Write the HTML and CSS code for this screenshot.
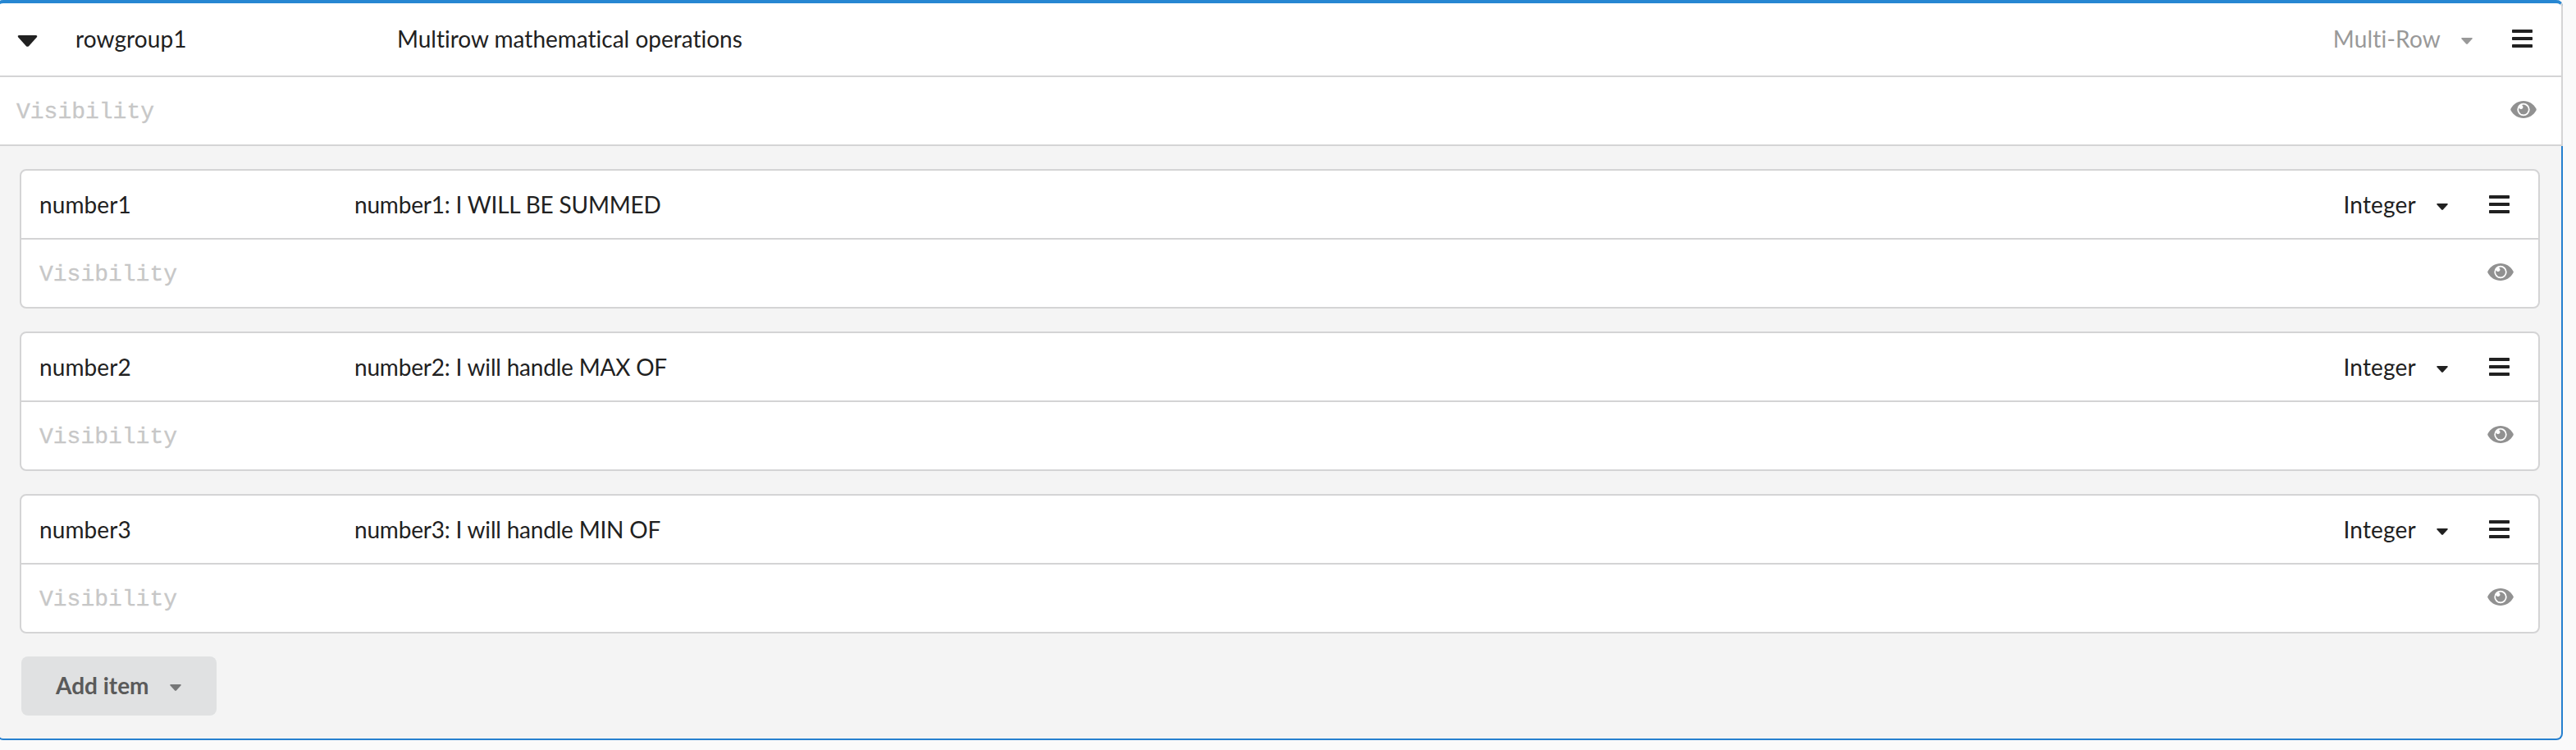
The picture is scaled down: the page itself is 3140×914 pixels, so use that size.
FILE: index.html
```html
<!DOCTYPE html>
<html lang="en">
<head>
<meta charset="utf-8">
<title>Form editor</title>
<link rel="stylesheet" href="styles.css">
</head>
<body>
<svg class="sprite" aria-hidden="true">
  <symbol id="caret" viewBox="0 0 14 8"><path d="M1 0H13Q14.300 .3 13.400 1.400L7.900 7.500Q7 8.300 6.100 7.500L.6 1.400Q-.3 .3 1 0Z"/></symbol>
  <symbol id="bars" viewBox="0 0 25 22"><rect width="25" height="4" rx=".8"/><rect y="9" width="25" height="4" rx=".8"/><rect y="18" width="25" height="4" rx=".8"/></symbol>
  <symbol id="eye" viewBox="0 0 32 21"><path fill-rule="evenodd" d="M.5 9.500C3.600 3.800 9.400 0 16 0S28.400 3.800 31.500 9.500Q32 10.500 31.500 11.500C28.400 17.200 22.600 21 16 21S3.600 17.200 .5 11.500Q0 10.500 .5 9.500ZM8.300 10.500A7.700 7.700 0 1 0 23.700 10.500A7.700 7.700 0 1 0 8.300 10.500Z"/><path d="M13.700 5.100A5.900 5.900 0 1 1 10.600 8.200A2.500 2.500 0 1 0 13.700 5.100Z"/></symbol>
</svg>
<section class="group">
  <header class="group-head">
    <div class="row row-main">
      <svg class="toggle"><use href="#caret"/></svg>
      <span class="name">rowgroup1</span>
      <span class="label">Multirow mathematical operations</span>
      <span class="type muted">Multi-Row <svg class="caret"><use href="#caret"/></svg></span>
      <svg class="bars"><use href="#bars"/></svg>
    </div>
    <div class="row row-vis"><span class="placeholder">Visibility</span><svg class="eye"><use href="#eye"/></svg></div>
  </header>
  <div class="group-body">
    <article class="card">
      <div class="row row-main">
        <span class="name">number1</span>
        <span class="label">number1: I WILL BE SUMMED</span>
        <span class="type">Integer <svg class="caret"><use href="#caret"/></svg></span>
        <svg class="bars"><use href="#bars"/></svg>
      </div>
      <div class="row row-vis"><span class="placeholder">Visibility</span><svg class="eye"><use href="#eye"/></svg></div>
    </article>
    <article class="card">
      <div class="row row-main">
        <span class="name">number2</span>
        <span class="label">number2: I will handle MAX OF</span>
        <span class="type">Integer <svg class="caret"><use href="#caret"/></svg></span>
        <svg class="bars"><use href="#bars"/></svg>
      </div>
      <div class="row row-vis"><span class="placeholder">Visibility</span><svg class="eye"><use href="#eye"/></svg></div>
    </article>
    <article class="card">
      <div class="row row-main">
        <span class="name">number3</span>
        <span class="label">number3: I will handle MIN OF</span>
        <span class="type">Integer <svg class="caret"><use href="#caret"/></svg></span>
        <svg class="bars"><use href="#bars"/></svg>
      </div>
      <div class="row row-vis"><span class="placeholder">Visibility</span><svg class="eye"><use href="#eye"/></svg></div>
    </article>
    <button class="add" type="button">Add item <svg class="caret"><use href="#caret"/></svg></button>
  </div>
</section>
</body>
</html>
```

FILE: styles.css
```css
* { box-sizing: border-box; }
body {
  margin: 0;
  background: #fafafa;
  color: #212121;
  font: 28px/40px Lato, sans-serif;
  font-variant-ligatures: none;
  overflow: hidden;
}
.sprite { display: none; }
svg { display: block; flex: none; fill: currentColor; }

.group {
  width: 3128px;
  height: 902px;
  margin-left: -4px;
  background: #f4f4f4;
  border: 2px solid #2680cf;
  border-top: 0;
  border-radius: 8px;
}
.group-head {
  margin: 0 -2px;
  height: 178px;
  background: #fff;
  border: 2px solid #d4d4d5;
  border-top: 4px solid #2787d2;
  border-radius: 8px 8px 0 0;
}
.row { display: flex; align-items: center; white-space: nowrap; }
.group-head .row-main { height: 88px; padding: 0 35px 2px 23px; }
.row-vis { border-top: 2px solid #d4d4d5; height: 84px; padding: 0 30px 0 22px; }

.toggle { width: 25px; height: 14px; margin: 6px 46px 0 0; }
.name { width: 392px; letter-spacing: .1px; }
.label { flex: 1; }
.type { display: flex; align-items: center; letter-spacing: .2px; }
.caret { width: 14px; height: 8px; margin: 6px 0 0 25px; }
.bars { width: 25px; height: 22px; margin-left: 48px; }
.eye { width: 32px; height: 21px; margin: 0 0 3px auto; color: #919191; }
.muted { color: #999; }
.placeholder {
  padding-top: 3px;
  color: #c7c7c7;
  font-family: "Liberation Mono", monospace;
  -webkit-text-stroke: .3px #c7c7c7;
}

.group-body { padding: 28px 26px 0; }
.card {
  height: 170px;
  margin-bottom: 28px;
  background: #fff;
  border: 2px solid #d4d4d5;
  border-radius: 8px;
}
.card .row-main { height: 82px; padding: 0 35px 0 22px; }
.card .name { width: 384px; }
.card .label { letter-spacing: -.2px; }
.card .bars { margin-left: 50px; }

.add {
  display: flex;
  align-items: center;
  width: 238px;
  height: 72px;
  margin-left: 2px;
  padding: 0 42px 2px;
  border: 0;
  border-radius: 8px;
  background: #e0e1e2;
  color: #5a5a5a;
  font: 700 28px/28px Lato, sans-serif;
}
.add .caret { color: #767778; }
```
